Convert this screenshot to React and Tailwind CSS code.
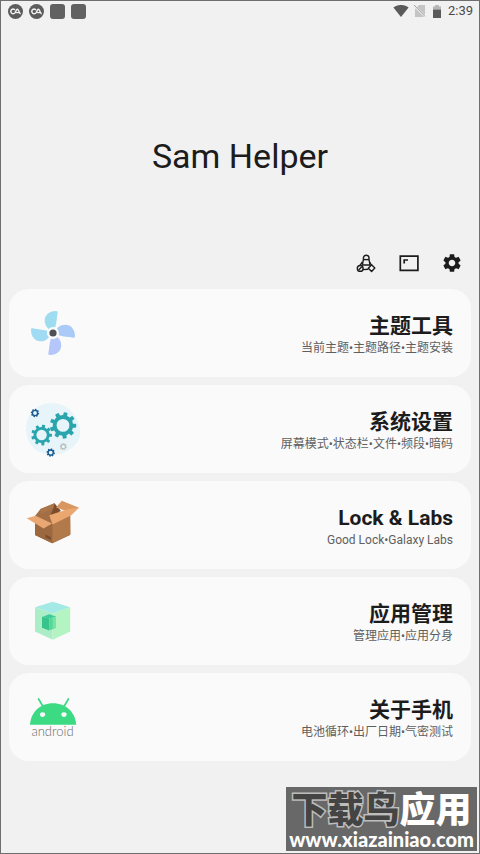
import { MdSettings } from "react-icons/md"

function Gear({ cx, cy, r, hole, teeth, tooth, color }) {
  const step = 360 / teeth
  const ring = (r * 0.78 + hole) / 2
  return (
    <g transform={`translate(${cx} ${cy})`} fill={color}>
      <circle r={ring} fill="none" stroke={color} strokeWidth={r * 0.78 - hole} />
      {Array.from({ length: teeth }, (_, i) => (
        <rect key={i} x={-tooth / 2} y={-r} width={tooth} height={r - hole - 0.5} rx={tooth / 5} transform={`rotate(${i * step + 12})`} />
      ))}
    </g>
  )
}

const blade = "M31 6C33 6 32.8 7.2 32.5 8.5C31.6 13 31.8 17 30.2 22.2C27.5 21.6 25.5 22.2 23.4 24C22.5 22.6 21.4 21.8 20.6 20C17.5 12 23 6 31 6Z"

function FanIcon() {
  return (
    <svg className="w-14 h-14" viewBox="0 0 56 56">
      <path d={blade} fill="#9edcf0" />
      <path d={blade} fill="#aacbf7" transform="rotate(90 28 28)" />
      <path d={blade} fill="#b5c6fb" transform="rotate(180 28 28)" />
      <path d={blade} fill="#a1daf3" transform="rotate(270 28 28)" />
      <circle cx="28" cy="28" r="5" fill="#fafafa" />
      <circle cx="28" cy="28" r="3.6" fill="#4e5154" />
    </svg>
  )
}

function GearsIcon() {
  return (
    <svg className="w-14 h-14" viewBox="0 0 56 56">
      <path d="M27 2C39 2 47 9 51 17C55 24 57 33 53 40C48 48 38 54 27 54C12 54 1 43 1 28C1 13 12 2 27 2Z" fill="#e7f5fb" />
      <Gear cx={38} cy={24.4} r={13.2} hole={6.4} teeth={9} tooth={4} color="#2ba5ad" />
      <Gear cx={16.6} cy={34} r={10.4} hole={5.2} teeth={9} tooth={3} color="#2ba5ad" />
      <Gear cx={10} cy={12} r={4.2} hole={1.9} teeth={8} tooth={1.6} color="#1d5b8f" />
      <Gear cx={25.7} cy={51.6} r={4.2} hole={1.9} teeth={8} tooth={1.6} color="#1d5b8f" />
      <Gear cx={38.3} cy={45.6} r={3.5} hole={1.7} teeth={8} tooth={1.3} color="#b9beb8" />
    </svg>
  )
}

function BoxIcon() {
  return (
    <svg className="w-14 h-14" viewBox="0 0 56 56">
      <path d="M10 24L27.3 14L45 17V38L27.3 46.3L10 38Z" fill="#8a5a35" />
      <path d="M10 19L15.5 12L29.5 6.3L32 15L27 28Z" fill="#a36e44" />
      <path d="M15.5 12L29.5 6.3L28.6 11L16 17Z" fill="#aa754a" />
      <path d="M29.5 6.3L36 14L25 19L28.6 11Z" fill="#7b4d2c" />
      <path d="M10 24.7L27.3 27.3V46.3L10 38Z" fill="#9b683f" />
      <path d="M27.3 27.3L45.3 17L45.6 37.6L27.3 46.3Z" fill="#b27a4b" />
      <path d="M1.7 21.3L10.6 18.7L27 26.6L18.6 31.4Z" fill="#e9a873" />
      <path d="M31 10.5L36.8 3.7L54 10.7L45 15.4Z" fill="#d89660" />
      <path d="M24.3 18.2L43.5 12L54 10.7L46.3 18.2L27.6 27.4Z" fill="#eaa770" />
      <path d="M20.5 37.6L26 40.2V43L20.5 40.4Z" fill="#7a4e2d" />
    </svg>
  )
}

function CubeIcon() {
  return (
    <svg className="w-14 h-14" viewBox="0 0 56 56">
      <path d="M27.7 8.8L45.2 14.3L27.7 20.4L10 14.3Z" fill="#a3e9e6" />
      <path d="M10 14.3L27.7 20.4V46.8L10 38.4Z" fill="#abedc6" />
      <path d="M45.2 14.3L27.7 20.4V46.8L45.2 38.4Z" fill="#b3f4c2" />
      <path d="M17 24L24.3 21.3L31 23.4L24.3 25.6Z" fill="#3bcc9b" />
      <path d="M17 24L24.3 25.6V37.4L17 34.8Z" fill="#36c48b" />
      <path d="M31 23.4L24.3 25.6V37.4L31 34.8Z" fill="#55d797" />
      <path d="M27.7 24.5L31 23.4V34.8L27.7 36.2Z" fill="#79e3a6" />
    </svg>
  )
}

function AndroidIcon() {
  return (
    <svg className="w-14 h-14" viewBox="0 0 56 56">
      <path d="M13.6 10L18 17.5M43.4 10L39 17.5" stroke="#3bda83" strokeWidth="1.7" strokeLinecap="round" />
      <path d="M5 35.8C5.8 23 15 14.2 28 14.2S50.2 23 51.2 35.8Z" fill="#3bda83" />
      <ellipse cx="17.6" cy="25.6" rx="2.6" ry="2.3" fill="#fafafa" />
      <ellipse cx="39" cy="25.6" rx="2.6" ry="2.3" fill="#fafafa" />
      <text x="27.5" y="47" textAnchor="middle" className="font-['Lato',sans-serif] text-[13px] font-light" fill="#6a6a6a">android</text>
    </svg>
  )
}

function CloudAppIcon() {
  return (
    <svg className="w-[15px] h-[15px]" viewBox="0 0 15 15">
      <circle cx="7.5" cy="7.5" r="7.5" fill="#5c5c5c" />
      <path d="M6.6 5.6A2.3 2.3 0 1 0 6.6 9.2C7.8 8.2 8.2 5.2 9.4 5.2C10.4 5.2 10.8 8 12.2 9.6M8.6 8.6H11" fill="none" stroke="#f2f2f2" strokeWidth="1.4" strokeLinecap="round" />
    </svg>
  )
}

function StatusBar() {
  return (
    <div className="flex items-center justify-between h-5 pl-[7px] pr-[6px]">
      <div className="flex items-center gap-[6px]">
        <CloudAppIcon />
        <CloudAppIcon />
        <span className="w-[15px] h-[15px] rounded-[3px] bg-[#616161]" />
        <span className="w-[15px] h-[15px] rounded-[3px] bg-[#616161]" />
      </div>
      <div className="flex items-center gap-[5px]">
        <svg className="w-4 h-3" viewBox="0 0 16 12">
          <path d="M8 12L0.4 2.6C4.8 -0.9 11.2 -0.9 15.6 2.6Z" fill="#5a5a5a" />
        </svg>
        <svg className="w-3 h-3" viewBox="0 0 12 12">
          <path d="M5 0H11V12H1V4Z" fill="#c4c4c4" />
          <path d="M0 0.6L11.6 12" stroke="#f1f1f1" strokeWidth="2" />
          <path d="M0 0L11 11.4" stroke="#a2a2a2" strokeWidth="1" />
        </svg>
        <svg className="w-3 h-[13px]" viewBox="0 0 12 13">
          <path d="M4.2 0H7.8V1.4H10V4.5H2V1.4H4.2Z" fill="#b5b5b5" />
          <path d="M2 4.5H10V13H2Z" fill="#5a5a5a" />
        </svg>
        <span className="text-[13px] leading-4 text-[#4a4a4a]">2:39</span>
      </div>
    </div>
  )
}

function Toolbar() {
  return (
    <div className="flex justify-end gap-[19px] pr-[15px] text-[#1c1c1c]">
      <button aria-label="Tools" className="w-6 h-6">
        <svg className="w-6 h-6" viewBox="0 0 24 24" fill="none" stroke="currentColor" strokeWidth="1.4" strokeLinejoin="round">
          <path d="M9.4 8.4V7A2.8 2.8 0 0 1 15 7V8.4L16 14H8.4Z" />
          <path d="M9.4 8.6H15" />
          <path d="M8.4 11L5.8 14.6M15.6 11L17.4 14" />
          <circle cx="6.2" cy="17.4" r="2.9" />
          <path d="M4.6 19L7.8 15.8M8.8 18.6L14.4 18.2" />
          <path d="M17.6 13.8L20.8 17L17.6 20.4L14.3 17.2Z" />
        </svg>
      </button>
      <button aria-label="Screen" className="w-6 h-6">
        <svg className="w-6 h-6" viewBox="0 0 24 24" fill="none" stroke="currentColor" strokeWidth="1.7">
          <path d="M3.3 5.2H20.9V19.3H3.3Z" />
          <path d="M7.2 12.4V9H11" />
        </svg>
      </button>
      <button aria-label="Settings" className="flex items-center justify-center w-6 h-6">
        <MdSettings size={22} />
      </button>
    </div>
  )
}

const items = [
  { icon: FanIcon, title: "主题工具", desc: "当前主题•主题路径•主题安装" },
  { icon: GearsIcon, title: "系统设置", desc: "屏幕模式•状态栏•文件•频段•暗码" },
  { icon: BoxIcon, title: "Lock & Labs", desc: "Good Lock•Galaxy Labs" },
  { icon: CubeIcon, title: "应用管理", desc: "管理应用•应用分身" },
  { icon: AndroidIcon, title: "关于手机", desc: "电池循环•出厂日期•气密测试" },
]

export default function App() {
  return (
    <div className="flex flex-col min-h-screen w-full bg-[#f1f1f1] border border-[#6e6e6e] font-['Roboto','Noto_Sans_CJK_SC',sans-serif]">
      <StatusBar />
      <h1 className="pt-[115px] pb-[75px] text-center text-[34px] leading-10 text-[#1c1c1c]">Sam Helper</h1>
      <Toolbar />
      <main className="flex flex-col gap-2 px-2 pt-[14px] pb-6">
        {items.map(({ icon: Icon, title, desc }) => (
          <button key={title} className="flex items-center justify-between w-full h-[88px] pl-4 pr-[18px] rounded-[20px] bg-[#fafafa] text-right">
            <Icon />
            <span className="flex flex-col pt-[2px]">
              <span className="text-[21px] leading-7 font-bold text-[#1c1c1c]">{title}</span>
              <span className="text-[12px] leading-4 text-[#5f5f5f]">{desc}</span>
            </span>
          </button>
        ))}
      </main>
      <footer className="flex flex-col items-center mt-auto ml-auto mr-[2px] mb-[2px] w-[191px] h-16 pt-1 bg-[#686868] whitespace-nowrap">
        <p className="text-[36px] leading-10 font-black text-white">
          <span className="text-[#444444] [-webkit-text-stroke:3px_#bdbdbd] [paint-order:stroke_fill]">下载鸟</span>应用
        </p>
        <a href="#" className="font-['Lato',sans-serif] text-[20px] leading-4 font-black text-white">www.xiazainiao.com</a>
      </footer>
    </div>
  )
}
